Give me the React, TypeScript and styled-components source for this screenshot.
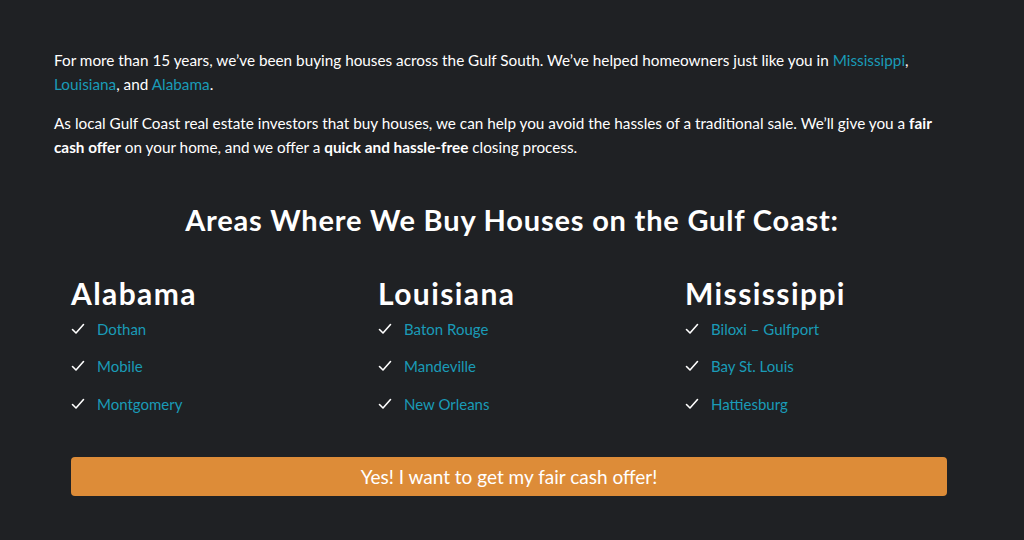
import React from "react";
import styled, { createGlobalStyle } from "styled-components";

const Global = createGlobalStyle`
  html, body { margin: 0; padding: 0; background: #1f2124; }
  body { font-family: Lato, "Open Sans", sans-serif; color: #ffffff; }
`;

const Page = styled.div`
  width: 1024px;
  height: 540px;
  background: #1f2124;
  box-sizing: border-box;
  padding: 48px 64px 0 54px;
  overflow: hidden;
`;

const Para = styled.p`
  margin: 0 0 15px 0;
  font-size: 15.3px;
  line-height: 24px;
  color: #ffffff;
`;

const Link = styled.a`
  color: #1a9bb7;
  text-decoration: none;
`;

const Title = styled.h2`
  margin: 41px -10px 0 0;
  text-align: center;
  font-size: 29px;
  letter-spacing: 0.8px;
  line-height: 40px;
  font-weight: 700;
`;

const Grid = styled.div`
  display: grid;
  grid-template-columns: repeat(3, 262px);
  column-gap: 45px;
  margin: 36px 0 0 17px;
`;

const State = styled.h3`
  margin: 0;
  font-size: 30px;
  letter-spacing: 1.4px;
  line-height: 34px;
  font-weight: 700;
`;

const List = styled.ul`
  list-style: none;
  margin: 0;
  padding: 0;
`;

const Item = styled.li`
  display: flex;
  align-items: center;
  gap: 12px;
  height: 37.5px;
  font-size: 15px;
`;

const Check = () => (
  <svg width="14" height="12" viewBox="0 0 14 12" fill="none">
    <path d="M1.5 6.5 L5 10 L12.5 1.5" stroke="#ffffff" strokeWidth="1.6" strokeLinecap="round" strokeLinejoin="round" />
  </svg>
);

const Button = styled.button`
  display: block;
  width: 876px;
  height: 39px;
  margin: 34px 0 0 17px;
  background: #dd8c38;
  border: none;
  border-radius: 4px;
  color: #ffffff;
  font-family: Lato, "Open Sans", sans-serif;
  font-size: 19px;
  cursor: pointer;
`;

const data: { state: string; cities: string[] }[] = [
  { state: "Alabama", cities: ["Dothan", "Mobile", "Montgomery"] },
  { state: "Louisiana", cities: ["Baton Rouge", "Mandeville", "New Orleans"] },
  { state: "Mississippi", cities: ["Biloxi – Gulfport", "Bay St. Louis", "Hattiesburg"] },
];

export default function App() {
  return (
    <>
      <Global />
      <Page>
        <Para>
          For more than 15 years, we’ve been buying houses across the Gulf South. We’ve helped homeowners just like you in{" "}
          <Link href="#">Mississippi</Link>, <Link href="#">Louisiana</Link>, and <Link href="#">Alabama</Link>.
        </Para>
        <Para>
          As local Gulf Coast real estate investors that buy houses, we can help you avoid the hassles of a traditional sale. We’ll give you a{" "}
          <b>fair cash offer</b> on your home, and we offer a <b>quick and hassle-free</b> closing process.
        </Para>
        <Title>Areas Where We Buy Houses on the Gulf Coast:</Title>
        <Grid>
          {data.map((col) => (
            <div key={col.state}>
              <State>{col.state}</State>
              <List>
                {col.cities.map((c) => (
                  <Item key={c}>
                    <Check />
                    <Link href="#">{c}</Link>
                  </Item>
                ))}
              </List>
            </div>
          ))}
        </Grid>
        <Button>Yes! I want to get my fair cash offer!</Button>
      </Page>
    </>
  );
}
